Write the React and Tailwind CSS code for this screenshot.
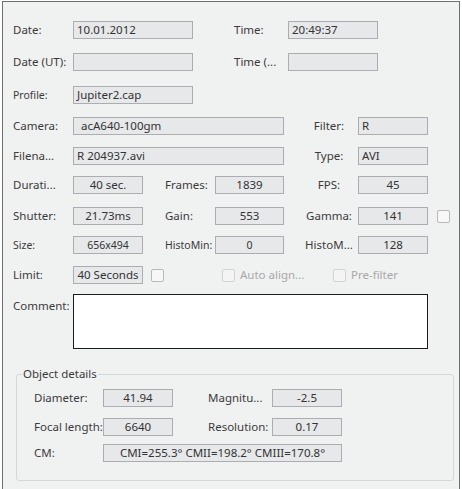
import React from 'react';

const font = { fontFamily: '"Noto Sans", "Liberation Sans", sans-serif' };

// 灰色の読み取り専用フィールド
const Field = ({ w, value, center, small, pl = 'pl-[3px]' }) => (
  <div
    className={`h-[18px] shrink-0 border border-[#abadb0] bg-[#e6e8ea] flex items-center text-[#333] leading-none ${
      center ? 'justify-center' : pl
    } ${small ? 'text-[10.5px]' : 'text-[11.5px]'} ${w}`}
  >
    {value}
  </div>
);

const Label = ({ w, text, center, small }) => (
  <div
    className={`shrink-0 text-[#3b3b3b] whitespace-nowrap leading-none ${center ? 'text-center' : ''} ${
      small ? 'text-[10.5px]' : 'text-[11.5px]'
    } ${w}`}
  >
    {text}
  </div>
);

const Check = ({ disabled, ml }) => (
  <div
    className={`w-[13px] h-[13px] shrink-0 rounded-[2px] border ${ml} ${
      disabled ? 'border-[#d3d3d3] bg-[#f4f4f4]' : 'border-[#b9b9b9] bg-[#f7f7f7]'
    }`}
  />
);

const Row = ({ mt, children }) => (
  <div className={`flex items-center h-[18px] ${mt}`}>{children}</div>
);

export default function App() {
  return (
    <div className="w-[462px] h-[489px] bg-white" style={font}>
      <div className="ml-[2px] mt-[1px] w-[458px] h-[488px] border-l border-t border-r border-[#6e6e6e] bg-[#f0f1f1] pl-[10px]">
        <Row mt="mt-[19px]">
          <Label w="w-[60px]" text="Date:" />
          <Field w="w-[120px]" value="10.01.2012" />
          <Label w="w-[54px] ml-[41px]" text="Time:" />
          <Field w="w-[90px]" value="20:49:37" />
        </Row>
        <Row mt="mt-[14px]">
          <Label w="w-[60px]" text="Date (UT):" />
          <Field w="w-[120px]" value="" />
          <Label w="w-[54px] ml-[41px]" text="Time (..." />
          <Field w="w-[90px]" value="" />
        </Row>
        <Row mt="mt-[15px]">
          <Label w="w-[60px]" text="Profile:" small />
          <Field w="w-[120px]" value="Jupiter2.cap" />
        </Row>
        <Row mt="mt-[13px]">
          <Label w="w-[60px]" text="Camera:" />
          <Field w="w-[211px]" value="acA640-100gm" pl="pl-[7px]" />
          <Label w="w-[58px] ml-[16px]" text="Filter:" center />
          <Field w="w-[70px]" value="R" />
        </Row>
        <Row mt="mt-[12px]">
          <Label w="w-[60px]" text="Filena..." />
          <Field w="w-[211px]" value="R 204937.avi" />
          <Label w="w-[58px] ml-[16px]" text="Type:" center />
          <Field w="w-[70px]" value="AVI" />
        </Row>
        <Row mt="mt-[11px]">
          <Label w="w-[60px]" text="Durati..." />
          <Field w="w-[70px]" value="40 sec." center />
          <Label w="w-[50px] ml-[22px]" text="Frames:" />
          <Field w="w-[69px]" value="1839" center />
          <Label w="w-[58px] ml-[16px]" text="FPS:" center />
          <Field w="w-[70px]" value="45" center />
        </Row>
        <Row mt="mt-[13px]">
          <Label w="w-[60px]" text="Shutter:" />
          <Field w="w-[70px]" value="21.73ms" center />
          <Label w="w-[50px] ml-[22px]" text="Gain:" />
          <Field w="w-[69px]" value="553" center />
          <Label w="w-[58px] ml-[16px]" text="Gamma:" center />
          <Field w="w-[70px]" value="141" center />
          <Check ml="ml-[9px]" />
        </Row>
        <Row mt="mt-[11px]">
          <Label w="w-[60px]" text="Size:" small />
          <Field w="w-[70px]" value="656x494" center small />
          <Label w="w-[50px] ml-[22px]" text="HistoMin:" small />
          <Field w="w-[69px]" value="0" center small />
          <Label w="w-[58px] ml-[16px]" text="HistoM..." center />
          <Field w="w-[70px]" value="128" center />
        </Row>
        <Row mt="mt-[12px]">
          <Label w="w-[60px]" text="Limit:" />
          <Field w="w-[70px]" value="40 Seconds" center />
          <Check ml="ml-[8px]" />
          <Check ml="ml-[58px]" disabled />
          <div className="w-[98px] pl-[5px] text-[11.5px] leading-none text-[#a8a8a8] whitespace-nowrap">Auto align...</div>
          <Check disabled />
          <div className="pl-[5px] text-[11.5px] leading-none text-[#a8a8a8] whitespace-nowrap">Pre-filter</div>
        </Row>
        <div className="flex mt-[10px]">
          <Label w="w-[60px] pt-[6px]" text="Comment:" />
          <div className="w-[355px] h-[55px] border border-[#1c1c1c] bg-white" />
        </div>

        {/* Object details */}
        <fieldset className="ml-[3px] mt-[17px] w-[438px] border border-[#d4d6d8] rounded-[3px] pb-[18px]">
          <legend className="ml-[5px] px-[1px] text-[11.5px] leading-[16px] text-[#3b3b3b]">Object details</legend>
          <div className="pl-[17px]">
            <Row mt="mt-[7px]">
              <Label w="w-[69px]" text="Diameter:" />
              <Field w="w-[70px]" value="41.94" center />
              <Label w="w-[64px] ml-[35px]" text="Magnitu..." />
              <Field w="w-[70px]" value="-2.5" center />
            </Row>
            <Row mt="mt-[11px]">
              <Label w="w-[69px]" text="Focal length:" />
              <Field w="w-[70px]" value="6640" center />
              <Label w="w-[64px] ml-[35px]" text="Resolution:" />
              <Field w="w-[70px]" value="0.17" center />
            </Row>
            <Row mt="mt-[8px]">
              <Label w="w-[69px]" text="CM:" />
              <Field w="w-[239px]" value="CMI=255.3° CMII=198.2° CMIII=170.8°" center />
            </Row>
          </div>
        </fieldset>
      </div>
    </div>
  );
}
